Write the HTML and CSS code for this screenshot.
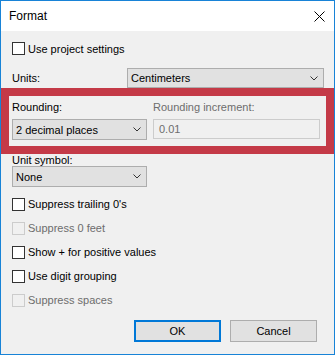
FILE: index.html
```html
<!DOCTYPE html>
<html>
<head>
<title>Format</title>
<link rel="stylesheet" href="styles.css">
</head>
<body>
<div class="window">
    <div class="titlebar">
        <span class="title">Format</span>
        <svg class="close" width="11" height="11" viewBox="0 0 11 11">
            <path d="M0.5 0.5 L10.5 10.5 M10.5 0.5 L0.5 10.5" stroke="#000" stroke-width="1" fill="none"/>
        </svg>
    </div>
    <div class="panel">
        <div class="check first"><span class="box"></span>Use project settings</div>

        <div class="units">
            <span class="units-label">Units:</span>
            <div class="combo units-combo">
                <span>Centimeters</span>
                <svg class="chev" width="8" height="5" viewBox="0 0 8 5"><polyline points="0.5,0.5 4,4 7.5,0.5" fill="none" stroke="#333" stroke-width="1"/></svg>
            </div>
        </div>

        <div class="highlight">
            <div class="col col-round">
                <div class="label">Rounding:</div>
                <div class="combo">
                    <span>2 decimal places</span>
                    <svg class="chev" width="8" height="5" viewBox="0 0 8 5"><polyline points="0.5,0.5 4,4 7.5,0.5" fill="none" stroke="#333" stroke-width="1"/></svg>
                </div>
            </div>
            <div class="col col-incr">
                <div class="label off">Rounding increment:</div>
                <div class="field">0.01</div>
            </div>
        </div>

        <div class="label sym-label">Unit symbol:</div>
        <div class="combo sym-combo">
            <span>None</span>
            <svg class="chev" width="8" height="5" viewBox="0 0 8 5"><polyline points="0.5,0.5 4,4 7.5,0.5" fill="none" stroke="#333" stroke-width="1"/></svg>
        </div>

        <div class="checks">
            <div class="check"><span class="box"></span>Suppress trailing 0's</div>
            <div class="check off"><span class="box"></span>Suppress 0 feet</div>
            <div class="check"><span class="box"></span>Show + for positive values</div>
            <div class="check"><span class="box"></span>Use digit grouping</div>
            <div class="check off"><span class="box"></span>Suppress spaces</div>
        </div>

        <div class="buttons">
            <div class="btn default">OK</div>
            <div class="btn">Cancel</div>
        </div>
    </div>
</div>
</body>
</html>
```

FILE: styles.css
```css
* {
    box-sizing: border-box;
}
body {
    margin: 0;
    font-family: "Liberation Sans", Arial, sans-serif;
    font-size: 11px;
    color: #000;
}

.window {
    width: 335px;
    height: 355px;
    border: 1px solid #1883d7;
    background-color: #f0f0f0;
    overflow: hidden;
}

.titlebar {
    height: 30px;
    background-color: #fff;
    display: flex;
    align-items: center;
    justify-content: space-between;
    padding: 0 9px 0 8px;
}
.title {
    font-size: 12px;
}
.close {
    display: block;
}

.panel {
    padding: 7px 10px 0 11px;
}

.check {
    display: flex;
    align-items: center;
    height: 24px;
}
.check.first {
    height: 21px;
}
.box {
    width: 13px;
    height: 13px;
    border: 1px solid #333;
    background-color: #fff;
    margin-right: 3px;
    flex-shrink: 0;
}
.check.off {
    color: #6d6d6d;
}
.check.off .box {
    border-color: #ccc;
    background-color: #f0f0f0;
}

.units {
    display: flex;
    align-items: center;
    margin-top: 9px;
}
.units-label {
    width: 115px;
}

.combo {
    height: 21px;
    border: 1px solid #adadad;
    background-color: #e1e1e1;
    display: flex;
    align-items: center;
    justify-content: space-between;
    padding: 0 5px 0 3px;
}
.units-combo {
    flex: 1;
    height: 20px;
    padding-right: 5px;
}
.chev {
    display: block;
}

.highlight {
    margin: 0 -10px 0 -11px;
    border: 8px solid #c43a47;
    padding: 4px 5px 6px 3px;
    display: flex;
    gap: 6px;
}
.col-round {
    width: 135px;
}
.col-incr {
    width: 167px;
}
.label {
    line-height: 15px;
    margin-bottom: 4px;
}
.label.off {
    color: #6d6d6d;
}
.field {
    height: 20px;
    border: 1px solid #ccc;
    background-color: #f0f0f0;
    color: #6d6d6d;
    padding-left: 5px;
    line-height: 18px;
}

.sym-label {
    line-height: 12px;
    margin-bottom: 0;
}
.sym-combo {
    width: 135px;
}

.checks {
    margin-top: 5px;
}

.buttons {
    display: flex;
    justify-content: flex-end;
    gap: 9px;
    margin: 8px 7px 0 0;
}
.btn {
    width: 87px;
    height: 22px;
    border: 1px solid #adadad;
    background-color: #e1e1e1;
    display: flex;
    align-items: center;
    justify-content: center;
}
.btn.default {
    border: 2px solid #0078d7;
}
```
